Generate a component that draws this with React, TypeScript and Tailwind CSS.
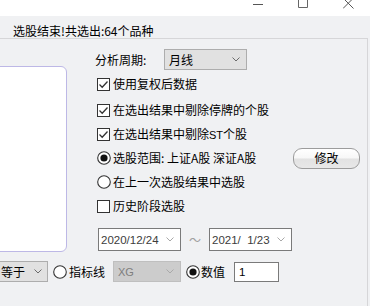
import React from 'react'

const cjk = "font-['Noto_Sans_CJK_SC','Liberation_Sans',sans-serif]"
const latin = "font-['Liberation_Sans','Noto_Sans_CJK_SC',sans-serif]"

function Chevron({ color = '#6b6b6b' }: { color?: string }) {
  return (
    <svg width="8" height="5" viewBox="0 0 8 5" className="shrink-0">
      <path d="M0.5 0.5 L4 4 L7.5 0.5" fill="none" stroke={color} strokeWidth="1" />
    </svg>
  )
}

function CheckBox({ checked }: { checked: boolean }) {
  return (
    <svg width="13" height="13" viewBox="0 0 13 13" className="shrink-0">
      <rect x="0.5" y="0.5" width="12" height="12" fill="#fff" stroke="#333" />
      {checked && (
        <path d="M2.5 6.5 L5.2 9.2 L10.5 3.5" fill="none" stroke="#333" strokeWidth="1.3" />
      )}
    </svg>
  )
}

function Radio({ checked }: { checked: boolean }) {
  return (
    <svg width="14" height="14" viewBox="0 0 14 14" className="shrink-0">
      <circle cx="7" cy="7" r="6.3" fill="#fff" stroke="#333" strokeWidth="1.1" />
      {checked && <circle cx="7" cy="7" r="3.6" fill="#111" />}
    </svg>
  )
}

function CheckRow({ label, checked, className = '' }: { label: React.ReactNode; checked: boolean; className?: string }) {
  return (
    <div className={`flex h-[24px] items-center gap-[3px] pl-[2px] ${className}`}>
      <CheckBox checked={checked} />
      <span>{label}</span>
    </div>
  )
}

function DateBox({ value }: { value: string }) {
  return (
    <div className={`flex h-[23px] w-[83px] items-center justify-between border border-[#7a7a7a] bg-white pl-[2px] pr-[6px] text-[11.5px] text-[#3c3c3c] ${latin}`}>
      <span className="whitespace-pre">{value}</span>
      <Chevron color="#a8a8a8" />
    </div>
  )
}

export default function App() {
  return (
    <div className={`relative h-[306px] w-[370px] overflow-hidden bg-[#f0f1f3] text-[12px] leading-[14px] text-black ${cjk}`}>
      {/* title bar, scrolled so only the bottom of the buttons shows */}
      <div className="flex h-[16px] items-start bg-white">
        <svg width="10" height="8" viewBox="0 0 10 8" className="ml-[253px]">
          <path d="M0 4.5 H10" stroke="#555" strokeWidth="1" />
        </svg>
        <svg width="10" height="8" viewBox="0 0 10 8" className="ml-[35px]">
          <path d="M0.5 -2 V7.5 H9.5 V-2" fill="none" stroke="#666" strokeWidth="1" />
        </svg>
        <svg width="11" height="9" viewBox="0 0 11 9" className="ml-[35px]">
          <path d="M0 -2 L10.5 8.5 M10.5 -2 L0 8.5" stroke="#555" strokeWidth="1" />
        </svg>
      </div>

      <div className="h-[22px] pl-[13px] pt-[8px]">选股结束!共选出:64个品种</div>

      <div className="h-[268px] w-[368px] border-t border-r border-[#d6d6d8]">
        <div className="flex">
          <div className="ml-[-10px] mt-[27px] h-[186px] w-[77px] rounded-[6px] border border-[#bdb8e6] bg-white" />

          <div className="ml-[28px] flex w-[265px] flex-col pt-[10px]">
            <div className="flex h-[21px] items-center">
              <span className="w-[69px]">分析周期:</span>
              <div className="flex h-[21px] w-[83px] items-center justify-between border border-[#adadad] bg-[#e1e1e1] pl-[4px] pr-[6px]">
                <span>月线</span>
                <Chevron />
              </div>
            </div>

            <CheckRow className="mt-[2px]" checked label="使用复权后数据" />
            <CheckRow className="mt-[2px]" checked label="在选出结果中剔除停牌的个股" />
            <CheckRow checked label={<>在选出结果中剔除<span className={`text-[11px] ${latin}`}>ST</span>个股</>} />

            <div className="flex h-[24px] items-center justify-between pl-[2px]">
              <div className="flex items-center gap-[2px]">
                <Radio checked />
                <span>选股范围: 上证A股 深证A股</span>
              </div>
              <button className="flex h-[21px] w-[67px] items-center justify-center rounded-[9px] border border-[#9c9c9c] bg-[linear-gradient(#ffffff_0%,#f7f7f7_48%,#e2e2e2_52%,#e8e8e8_100%)] text-[12px]">
                修改
              </button>
            </div>

            <div className="flex h-[24px] items-center gap-[2px] pl-[2px]">
              <Radio checked={false} />
              <span>在上一次选股结果中选股</span>
            </div>

            <CheckRow checked={false} label="历史阶段选股" />

            <div className="mt-[10px] flex items-center pl-[3px]">
              <DateBox value="2020/12/24" />
              <span className="w-[28px] text-center text-[12px] text-[#a0a0a0]">～</span>
              <DateBox value="2021/  1/23" />
            </div>
          </div>
        </div>

        <div className="mt-[9px] flex h-[21px] items-center">
          <div className="ml-[-10px] flex h-[21px] w-[58px] items-center justify-between border border-[#adadad] bg-[#e1e1e1] pl-[10px] pr-[5px]">
            <span>等于</span>
            <Chevron />
          </div>
          <div className="ml-[5px]">
            <Radio checked={false} />
          </div>
          <span className="ml-[2px]">指标线</span>
          <div className={`ml-[8px] flex h-[21px] w-[68px] items-center justify-between border border-[#bfbfbf] bg-[#cccccc] pl-[4px] pr-[6px] text-[11px] text-[#7e7e7e] ${latin}`}>
            <span>XG</span>
            <Chevron color="#a9a9a9" />
          </div>
          <div className="ml-[5px]">
            <Radio checked />
          </div>
          <span className="ml-[1px]">数值</span>
          <div className={`ml-[9px] flex h-[20px] w-[45px] items-center border border-[#7a7a7a] bg-white pl-[4px] text-[11.5px] ${latin}`}>
            1
          </div>
        </div>
      </div>
    </div>
  )
}
